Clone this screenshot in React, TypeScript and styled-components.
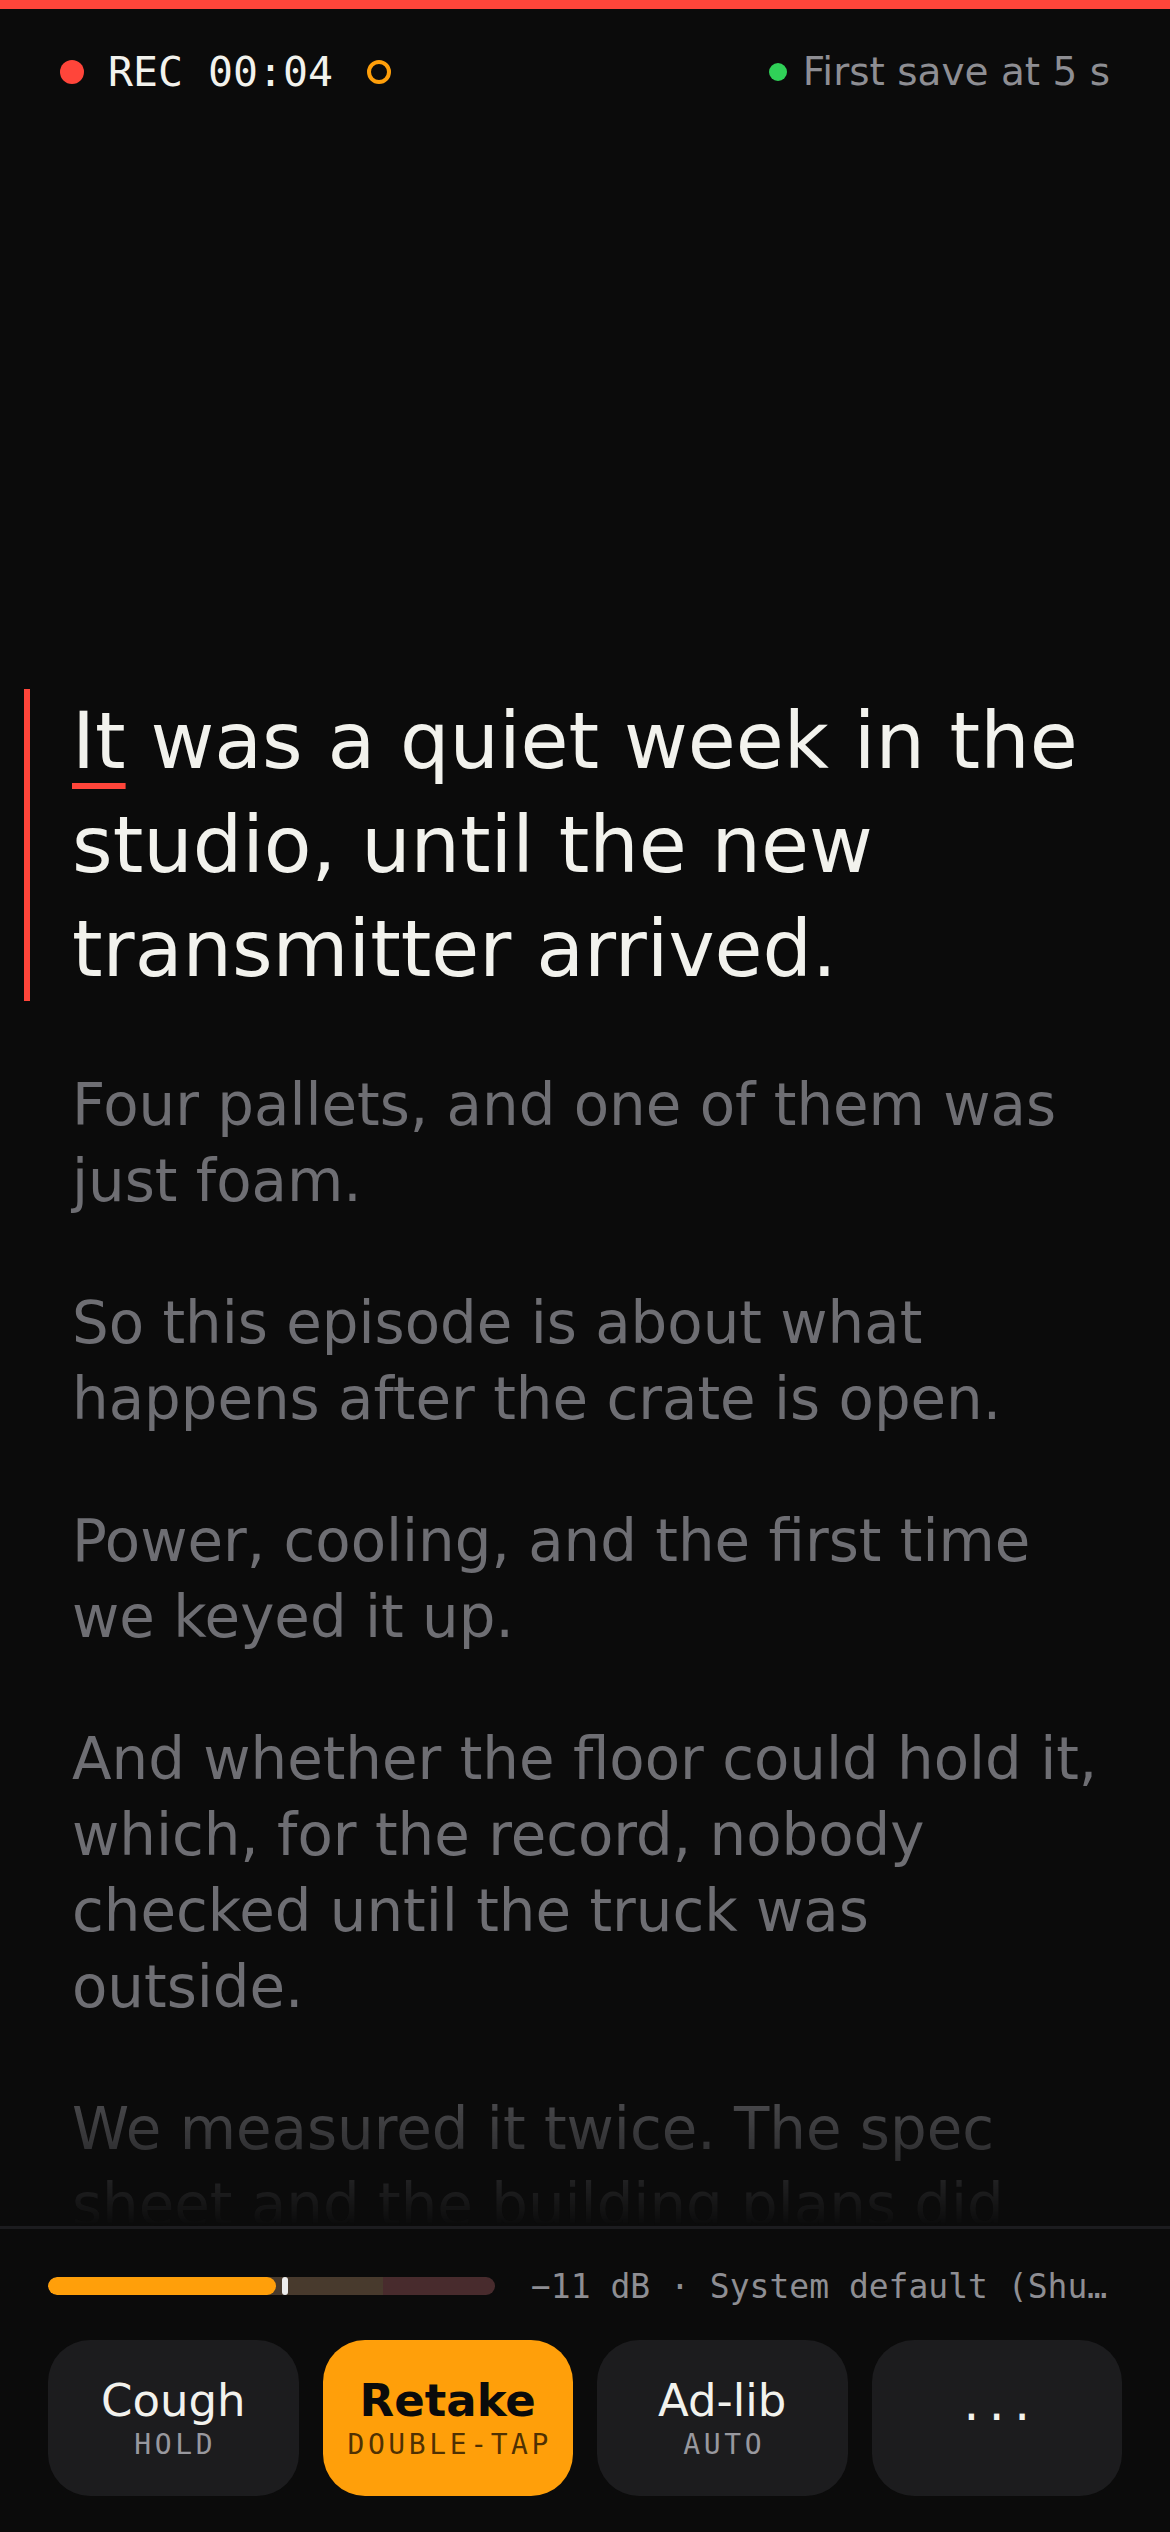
import React from 'react';
import styled, { createGlobalStyle } from 'styled-components';

const SANS = '"DejaVu Sans", "Liberation Sans", sans-serif';
const MONO = '"DejaVu Sans Mono", "Liberation Mono", monospace';

const RED = '#ff453a';
const ORANGE = '#ff9f0a';
const GREEN = '#30d158';
const INK = '#f2f2ed';
const MUTED = '#8e8e93';

const paragraphs = [
    'Four pallets, and one of them was just foam.',
    'So this episode is about what happens after the crate is open.',
    'Power, cooling, and the first time we keyed it up.',
    'And whether the floor could hold it, which, for the record, nobody checked until the truck was outside.',
    'We measured it twice. The spec sheet and the building plans did not agree, and neither of them was right.',
];

const actions = [
    { label: 'Cough', hint: 'HOLD' },
    { label: 'Retake', hint: 'DOUBLE-TAP', primary: true },
    { label: 'Ad-lib', hint: 'AUTO' },
];

// input level, 0..1 of the meter track
const level = 0.51;
const peak = 0.523;

export default function App() {
    return (
        <>
            <GlobalStyle />
            <Screen>
                <RecordingBar />

                <Header>
                    <RecGroup>
                        <Dot $color={RED} $size={24} />
                        <RecLabel>REC 00:04</RecLabel>
                        <Ring />
                    </RecGroup>
                    <SaveStatus>
                        <Dot $color={GREEN} $size={18} />
                        First save at 5 s
                    </SaveStatus>
                </Header>

                <Script>
                    <Headline>
                        <CurrentWord>It</CurrentWord> was a quiet week in the
                        studio, until the new transmitter arrived.
                    </Headline>
                    {paragraphs.map((text) => (
                        <Paragraph key={text}>{text}</Paragraph>
                    ))}
                </Script>

                <Footer>
                    <MeterRow>
                        <Meter>
                            <MeterFill style={{ width: `${level * 100}%` }} />
                            <PeakMarker style={{ left: `${peak * 100}%` }} />
                        </Meter>
                        <DeviceText>
                            −11 dB · System default (Shure MV7)
                        </DeviceText>
                    </MeterRow>

                    <ButtonRow>
                        {actions.map((a) => (
                            <ActionButton key={a.label} $primary={a.primary}>
                                <ActionLabel $primary={a.primary}>
                                    {a.label}
                                </ActionLabel>
                                <ActionHint $primary={a.primary}>
                                    {a.hint}
                                </ActionHint>
                            </ActionButton>
                        ))}
                        <ActionButton>
                            <MoreGlyph>···</MoreGlyph>
                        </ActionButton>
                    </ButtonRow>
                </Footer>
            </Screen>
        </>
    );
}

const GlobalStyle = createGlobalStyle`
    html, body {
        margin: 0;
        padding: 0;
        background: #0b0b0b;
    }
    body {
        font-family: ${SANS};
        -webkit-font-smoothing: antialiased;
    }
    * {
        box-sizing: border-box;
    }
`;

const Screen = styled.div`
    display: flex;
    flex-direction: column;
    height: 2532px;
    background: #0b0b0b;
    overflow: hidden;
`;

const RecordingBar = styled.div`
    flex-shrink: 0;
    height: 9px;
    background: ${RED};
`;

const Header = styled.header`
    flex-shrink: 0;
    display: flex;
    align-items: center;
    justify-content: space-between;
    height: 126px;
    padding: 0 60px;
`;

const RecGroup = styled.div`
    display: flex;
    align-items: center;
    gap: 24px;
`;

const Dot = styled.span<{ $color: string; $size: number }>`
    display: inline-block;
    flex-shrink: 0;
    width: ${(p) => p.$size}px;
    height: ${(p) => p.$size}px;
    border-radius: 50%;
    background: ${(p) => p.$color};
`;

const RecLabel = styled.span`
    font-family: ${MONO};
    font-size: 41.5px;
    line-height: 42px;
    color: ${INK};
`;

const Ring = styled.span`
    width: 24px;
    height: 24px;
    margin-left: 10px;
    border: 4.5px solid ${ORANGE};
    border-radius: 50%;
`;

const SaveStatus = styled.div`
    display: flex;
    align-items: center;
    gap: 16px;
    font-size: 39px;
    line-height: 42px;
    color: ${MUTED};
`;

const Script = styled.main`
    flex: 1;
    min-height: 0;
    display: flex;
    flex-direction: column;
    gap: 66px;
    padding: 554px 72px 0;
    overflow: hidden;
    -webkit-mask-image: linear-gradient(
        to bottom,
        #000 calc(100% - 200px),
        transparent 100%
    );
    mask-image: linear-gradient(
        to bottom,
        #000 calc(100% - 200px),
        transparent 100%
    );
`;

const Headline = styled.p`
    margin: 0 0 0 -48px;
    padding-left: 42px;
    border-left: 6px solid ${RED};
    font-size: 78px;
    line-height: 104px;
    color: ${INK};
`;

const CurrentWord = styled.span`
    text-decoration: underline;
    text-decoration-color: ${RED};
    text-decoration-thickness: 6px;
    text-underline-offset: 15px;
`;

const Paragraph = styled.p`
    margin: 0;
    flex-shrink: 0;
    font-size: 57.8px;
    line-height: 76px;
    color: #6e6e73;
`;

const Footer = styled.footer`
    flex-shrink: 0;
    display: flex;
    flex-direction: column;
    gap: 34px;
    padding: 37px 48px 36px;
    border-top: 3px solid #1c1c1f;
`;

const MeterRow = styled.div`
    display: flex;
    align-items: center;
    gap: 36px;
    height: 40px;
`;

const Meter = styled.div`
    position: relative;
    flex-shrink: 0;
    width: 447px;
    height: 18px;
    border-radius: 9px;
    overflow: hidden;
    background: linear-gradient(
        to right,
        #483a2d 0,
        #483a2d 75%,
        #482b2d 75%,
        #482b2d 100%
    );
`;

const MeterFill = styled.div`
    height: 100%;
    border-radius: 9px;
    background: ${ORANGE};
`;

const PeakMarker = styled.div`
    position: absolute;
    top: 0;
    width: 6px;
    height: 100%;
    border-radius: 3px;
    background: #ededed;
`;

const DeviceText = styled.span`
    flex: 1;
    min-width: 0;
    font-family: ${MONO};
    font-size: 33px;
    color: ${MUTED};
    white-space: nowrap;
    overflow: hidden;
    text-overflow: ellipsis;
`;

const ButtonRow = styled.div`
    display: grid;
    grid-template-columns: repeat(4, 1fr);
    gap: 24px;
`;

const ActionButton = styled.button<{ $primary?: boolean }>`
    display: flex;
    flex-direction: column;
    align-items: center;
    justify-content: center;
    height: 156px;
    padding: 0;
    border: none;
    border-radius: 42px;
    background: ${(p) => (p.$primary ? ORANGE : '#1c1c1e')};
    font-family: ${SANS};
    cursor: pointer;
`;

const ActionLabel = styled.span<{ $primary?: boolean }>`
    font-size: 45px;
    line-height: 52px;
    font-weight: ${(p) => (p.$primary ? 700 : 400)};
    color: ${(p) => (p.$primary ? '#0b0b0b' : INK)};
`;

const ActionHint = styled.span<{ $primary?: boolean }>`
    margin-right: -4px;
    font-family: ${MONO};
    font-size: 28px;
    line-height: 35px;
    letter-spacing: 3.6px;
    color: ${(p) => (p.$primary ? 'rgba(0, 0, 0, 0.7)' : '#98989e')};
`;

const MoreGlyph = styled.span`
    font-family: ${MONO};
    font-size: 42px;
    line-height: 42px;
    color: ${INK};
`;
